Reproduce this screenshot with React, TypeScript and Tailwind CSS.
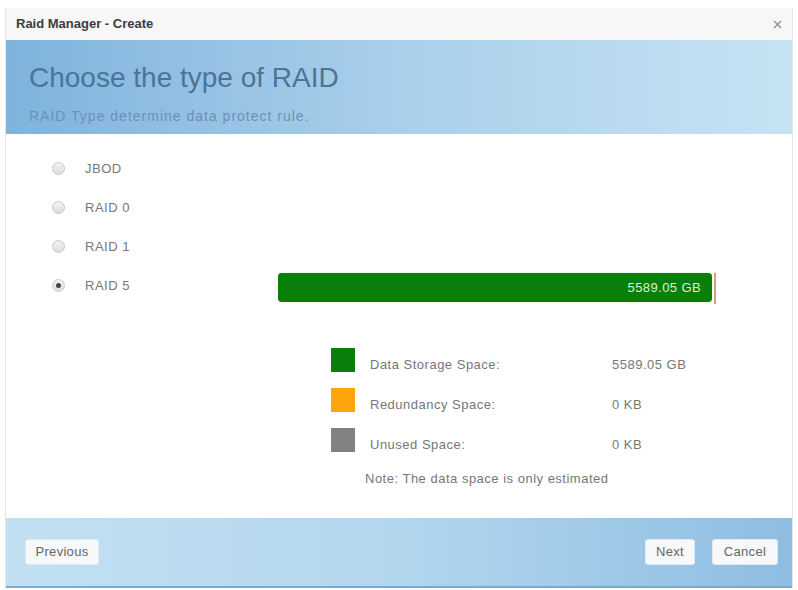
import { X } from "lucide-react";

const raidTypes = ["JBOD", "RAID 0", "RAID 1", "RAID 5"];

const legend = [
  { color: "bg-[#0b7d0b]", label: "Data Storage Space:", value: "5589.05 GB" },
  { color: "bg-[#fea30a]", label: "Redundancy Space:", value: "0 KB" },
  { color: "bg-[#828282]", label: "Unused Space:", value: "0 KB" },
];

function Radio({ checked }: { checked: boolean }) {
  return (
    <span className="flex h-[13px] w-[13px] items-center justify-center rounded-full border border-[#c8c8c8] bg-gradient-to-b from-[#f4f4f4] to-[#dcdcdc]">
      {checked && <span className="h-[5px] w-[5px] rounded-full bg-[#444]" />}
    </span>
  );
}

function FooterButton({ label, className }: { label: string; className: string }) {
  return (
    <button
      className={`h-[26px] rounded-[3px] border border-[#dfe9f1] bg-[#f6f8fa] text-[13px] tracking-[0.3px] text-[#666] ${className}`}
    >
      {label}
    </button>
  );
}

export default function App() {
  return (
    <div
      className="h-[590px] w-[798px] bg-white px-[5px] pt-[8px]"
      style={{ fontFamily: '"Liberation Sans", Arial, sans-serif' }}
    >
      <div className="flex h-[580px] flex-col border-x border-[#e6e6e6]">
        <div className="flex h-[32px] items-center justify-between bg-[#f7f7f7] pl-[10px] pr-[8px]">
          <span className="text-[13px] font-bold text-[#3c3c3c]">Raid Manager - Create</span>
          <X className="h-[13px] w-[13px] text-[#888]" strokeWidth={2} />
        </div>

        <div className="flex h-[94px] flex-col bg-gradient-to-r from-[#7fb3dc] via-[#a9cfeb] to-[#c6e3f3] pl-[23px] pt-[22px]">
          <h1 className="text-[28px] leading-[32px] text-[#4b7497]">Choose the type of RAID</h1>
          <p className="mt-[12px] text-[14px] tracking-[1px] text-[#6b92b6]">RAID Type determine data protect rule.</p>
        </div>

        <div className="flex h-[384px] bg-white">
          <div className="flex w-[272px] flex-col gap-[26px] pl-[46px] pt-[28px]">
            {raidTypes.map((t) => (
              <label key={t} className="flex h-[13px] items-center gap-[20px] text-[13px] tracking-[0.5px] text-[#777]">
                <Radio checked={t === "RAID 5"} />
                <span>{t}</span>
              </label>
            ))}
          </div>

          <div className="flex flex-col pt-[139px]">
            <div className="flex items-stretch">
              <div className="flex h-[29px] w-[434px] items-center justify-end rounded-[4px] bg-[#087f08] pr-[11px] text-[13px] tracking-[0.4px] text-[#d6f3d0] shadow-[0_0_1px_#5c5]">
                5589.05 GB
              </div>
              <div className="ml-[2px] h-[31px] w-[2px] bg-[#c9a27a]" />
            </div>

            <div className="ml-[53px] mt-[44px] flex flex-col gap-[16px]">
              {legend.map((l) => (
                <div key={l.label} className="flex h-[24px] items-center">
                  <span className={`h-[24px] w-[24px] ${l.color}`} />
                  <span className="ml-[15px] mt-[9px] w-[242px] text-[13px] tracking-[0.5px] text-[#777]">{l.label}</span>
                  <span className="mt-[9px] text-[13px] tracking-[0.5px] text-[#777]">{l.value}</span>
                </div>
              ))}
              <p className="ml-[34px] mt-[1px] text-[13px] tracking-[0.5px] text-[#777]">Note: The data space is only estimated</p>
            </div>
          </div>
        </div>

        <div className="flex h-[70px] items-center justify-between border-b-2 border-[#7fa9c9] bg-gradient-to-r from-[#c2e0f1] via-[#b2d6ee] to-[#8ebde2] pl-[19px] pr-[14px]">
          <FooterButton label="Previous" className="w-[74px]" />
          <div className="flex gap-[17px]">
            <FooterButton label="Next" className="w-[50px]" />
            <FooterButton label="Cancel" className="w-[66px]" />
          </div>
        </div>
      </div>
    </div>
  );
}
